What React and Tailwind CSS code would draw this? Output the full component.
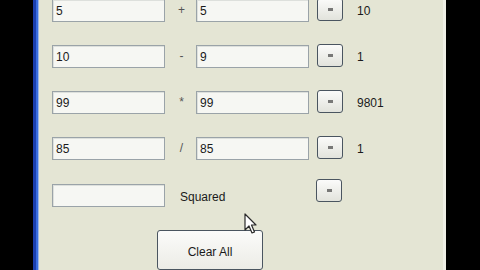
import React from 'react';

const rows = [
    { a: '5', op: '+', b: '5', result: '10' },
    { a: '10', op: '-', b: '9', result: '1' },
    { a: '99', op: '*', b: '99', result: '9801' },
    { a: '85', op: '/', b: '85', result: '1' },
];

function TextBox({ value }) {
    return (
        <div className="w-[113px] h-[23px] border border-[#9aa3a8] bg-[#f6f7f3] px-[3px] flex items-center text-[12px] text-[#1a1a1a] shadow-[inset_1px_1px_0_#dde0dc]">
            {value}
        </div>
    );
}

function EqButton() {
    return (
        <div className="w-[26px] h-[23px] rounded-[3px] border border-[#4a5560] bg-gradient-to-b from-[#fbfbfa] to-[#e2e3dc] flex items-center justify-center">
            <span className="block w-[5px] h-[3px] bg-[#5a5a5a] opacity-80" />
        </div>
    );
}

function Cursor() {
    return (
        <svg className="absolute left-[244px] top-[213px]" width="13" height="22" viewBox="0 0 13 22">
            <path
                d="M1 1 L1 17 L5 13 L8 20 L10.5 19 L7.5 12 L12 12 Z"
                fill="#ffffff"
                stroke="#2a2a2a"
                strokeWidth="1.2"
                strokeLinejoin="round"
            />
        </svg>
    );
}

export default function App() {
    return (
        <div
            className="relative w-[480px] h-[270px] bg-black flex overflow-hidden"
            style={{ fontFamily: '"Liberation Sans", Arial, sans-serif' }}
        >
            <div className="w-[33px] shrink-0 bg-black" />
            {/* window frame edge */}
            <div className="w-[3px] shrink-0 bg-[#1b3fae]" />
            <div className="w-[2px] shrink-0 bg-[#3a6ee0]" />
            <div className="w-[1px] shrink-0 bg-[#9fb8e8]" />

            <div className="flex-1 bg-[#e4e5d4] pl-[13px] -mt-px flex flex-col">
                <div className="flex flex-col gap-[23px]">
                    {rows.map((r, i) => (
                        <div key={i} className="flex items-start h-[23px]">
                            <TextBox value={r.a} />
                            <div className="w-[31px] text-center text-[12px] text-[#555] leading-[23px] pl-[2px]">
                                {r.op}
                            </div>
                            <TextBox value={r.b} />
                            <div className="ml-[8px] -mt-[1px]">
                                <EqButton />
                            </div>
                            <div className="ml-[14px] text-[12px] text-[#1a1a1a] leading-[23px] mt-px">
                                {r.result}
                            </div>
                        </div>
                    ))}
                    <div className="flex items-start h-[23px] mt-px">
                        <TextBox value="" />
                        <div className="ml-[15px] mt-[2px] text-[12px] text-[#1a1a1a] leading-[23px]">Squared</div>
                        <div className="ml-[91px] -mt-[5px]">
                            <EqButton />
                        </div>
                    </div>
                </div>

                <div className="ml-[105px] mt-[23px] w-[106px] h-[50px] rounded-[3px] border border-[#4a5560] bg-gradient-to-b from-[#fbfbfa] to-[#ecece6] flex justify-center pt-[12px] text-[12px] text-[#1a1a1a]">
                    Clear All
                </div>
            </div>

            <div className="w-[3px] shrink-0 bg-[#eff0e6]" />
            <div className="w-[34px] shrink-0 bg-black" />
            <Cursor />
        </div>
    );
}
